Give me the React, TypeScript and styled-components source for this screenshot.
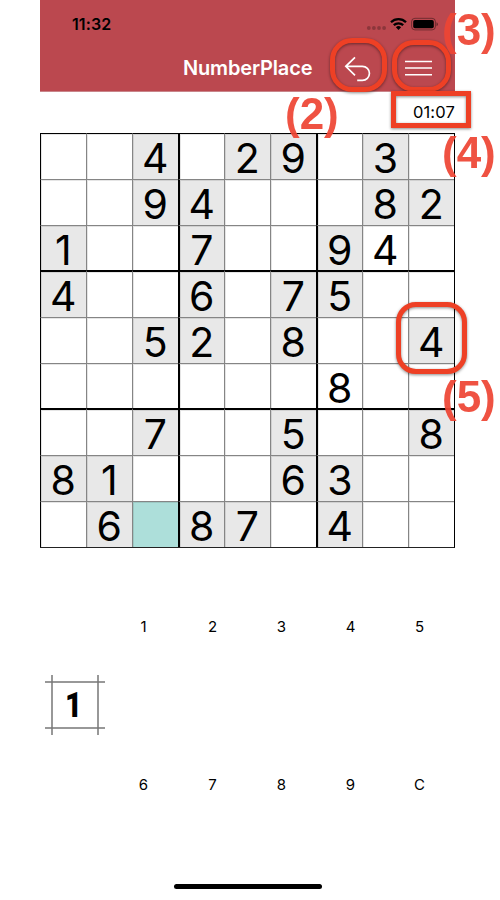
import React from 'react';
import styled, { createGlobalStyle } from 'styled-components';

const GlobalStyle = createGlobalStyle`
  * { box-sizing: border-box; }
  body { margin: 0; background: #fff; font-family: Inter, "Liberation Sans", sans-serif; color: #000; }
`;

const Page = styled.div`
  position: relative;
  width: 500px;
  height: 900px;
  overflow: hidden;
  background: #fff;
`;

const Phone = styled.main`
  width: 415px;
  height: 900px;
  margin-left: 40px;
  display: flex;
  flex-direction: column;
`;

const Header = styled.header`
  height: 92px;
  flex: none;
  background: #bb484f;
  border-bottom: 1px solid #c9858a;
`;

const StatusBar = styled.div`
  height: 47px;
  padding: 0 16px 0 32px;
  display: flex;
  justify-content: space-between;
`;

const Clock = styled.span`
  margin-top: 14px;
  font-size: 16px;
  line-height: 20px;
  font-weight: 600;
  letter-spacing: 0.1px;
`;

const StatusIcons = styled.svg`
  width: 73px;
  height: 16px;
  margin-top: 16px;
`;

const NavBar = styled.div`
  height: 44px;
  display: grid;
  grid-template-columns: 1fr 129px 1fr;
  align-items: center;
`;

const Title = styled.h1`
  grid-column: 2;
  margin: 0;
  color: #fff;
  font-size: 20px;
  line-height: 24px;
  font-weight: 600;
  letter-spacing: -0.16px;
  white-space: nowrap;
  text-align: center;
  transform: translateY(-1px);
`;

const Actions = styled.div`
  display: flex;
  height: 44px;
  padding-left: 31px;
  gap: 30px;
`;

const ActionButton = styled.button`
  border: 0;
  padding: 0;
  background: none;
  width: 30px;
  height: 44px;
  svg { display: block; }
`;

const TimerRow = styled.div`
  height: 40px;
  margin-bottom: 1px;
  flex: none;
  display: flex;
  justify-content: flex-end;
  align-items: center;
  font-size: 16.5px;
  letter-spacing: 0.15px;
`;

const Board = styled.div`
  width: 415px;
  height: 415px;
  flex: none;
  display: grid;
  grid-template: repeat(9, 46px) / repeat(9, 46px);
  border-right: 1px solid #000;
  border-bottom: 1px solid #222;
`;

type CellKind = 'open' | 'given' | 'selected';
const fills: Record<CellKind, string> = { open: '#fff', given: '#e8e8e8', selected: '#addfda' };
const line = (n: number) =>
  n === 0 ? '1px solid #000' : n % 3 === 0 ? '2px solid #000' : '1px solid #858585';

const Cell = styled.div<{ $row: number; $col: number; $kind: CellKind }>`
  display: flex;
  align-items: center;
  justify-content: center;
  margin-top: ${p => (p.$row > 0 && p.$row % 3 === 0 ? '-1px' : '0')};
  border-left: ${p => line(p.$col)};
  border-top: ${p => line(p.$row)};
  background: ${p => fills[p.$kind]};
  box-shadow: inset 1px 1px 0 rgba(0, 0, 0, 0.1);
  font-size: 41px;
  line-height: 45px;
  span { transform: translate(-0.2px, 2px); }
`;

const Keypad = styled.div`
  height: 316px;
  flex: none;
  display: grid;
  grid-template: repeat(2, 158px) / repeat(6, 69px);
`;

const MemoButton = styled.button`
  grid-row: 1 / 3;
  border: 0;
  padding: 0 0 2px;
  background: none;
  display: grid;
  place-content: center;
  place-items: center;
`;

const MemoFrame = styled.svg`
  grid-area: 1 / 1;
  width: 60px;
  height: 60px;
`;

const MemoDigit = styled.span`
  grid-area: 1 / 1;
  font: 900 35px/40px Roboto, sans-serif;
  color: #000;
  transform: translate(-0.5px, 0.5px) scaleX(0.85);
`;

const Key = styled.button`
  border: 0;
  padding: 0;
  background: none;
  color: #000;
  font: 400 15px/20px Inter, sans-serif;
`;

const HomeBar = styled.div`
  width: 148px;
  height: 5px;
  margin: 19.5px auto 0;
  border-radius: 3px;
  background: #000;
`;

const Ring = styled.div<{ $x: number; $y: number; $w: number; $h: number; $r: number }>`
  position: absolute;
  left: ${p => p.$x}px;
  top: ${p => p.$y}px;
  width: ${p => p.$w}px;
  height: ${p => p.$h}px;
  border: 5px solid #ee4025;
  border-radius: ${p => p.$r}px;
  filter: drop-shadow(0 1.5px 1.5px rgba(0, 0, 0, 0.45));
  pointer-events: none;
`;

const Note = styled.span<{ $x: number; $y: number }>`
  position: absolute;
  left: ${p => p.$x}px;
  top: ${p => p.$y}px;
  font: 700 44px/44px "Liberation Sans", Arial, sans-serif;
  color: #ee4534;
  opacity: 0.93;
  pointer-events: none;
`;

// Lowercase letters mark cells filled in by the player: a = 1 … i = 9.
const puzzle = [
  '..4.29.3.',
  '..94...82',
  '1..7..9d.',
  '4..6.75..',
  '..52.8..4',
  '......h..',
  '..7..5..8',
  '81...63..',
  '.6s87.4..',
];

function readCell(ch: string): { kind: CellKind; text: string } {
  if (ch === '.') return { kind: 'open', text: '' };
  if (ch === 's') return { kind: 'selected', text: '' };
  if (ch >= 'a') return { kind: 'open', text: String(ch.charCodeAt(0) - 96) };
  return { kind: 'given', text: ch };
}

const keys = ['1', '2', '3', '4', '5', '6', '7', '8', '9', 'C'];

export default function App() {
  return (
    <Page>
      <GlobalStyle />
      <Phone>
        <Header>
          <StatusBar>
            <Clock>11:32</Clock>
            <StatusIcons viewBox="366 16 73 16">
              <g fill="#000" fillOpacity="0.25">
                <circle cx="368.8" cy="28" r="1.9" />
                <circle cx="373.9" cy="28" r="1.9" />
                <circle cx="379" cy="28" r="1.9" />
                <circle cx="384.1" cy="28" r="1.9" />
              </g>
              <g fill="none" stroke="#000" strokeWidth="2.3">
                <path d="M391 22.2a10.7 10.7 0 0 1 15 0" />
                <path d="M393.8 25.2a6.8 6.8 0 0 1 9.4 0" />
              </g>
              <path d="M395.9 27.2a3.8 3.8 0 0 1 5.2 0l-2.6 2.7z" />
              <rect x="411.6" y="18.3" width="23.8" height="11.6" rx="3.3" fill="none" stroke="#000" strokeOpacity="0.4" />
              <rect x="413.2" y="19.9" width="20.6" height="8.4" rx="1.8" />
              <path d="M436.5 22.2q1.4.6 1.4 2t-1.4 2z" fillOpacity="0.45" />
            </StatusIcons>
          </StatusBar>
          <NavBar>
            <Title>NumberPlace</Title>
            <Actions>
              <ActionButton aria-label="Undo">
                <svg width="30" height="44" viewBox="343 47 30 44" fill="none" stroke="#fff" strokeWidth="1.7">
                  <path d="M355 57.4 345.8 66.3 355 75.3M346 66.3H362.4a7.05 7.05 0 0 1 0 14.1H357.2" />
                </svg>
              </ActionButton>
              <ActionButton aria-label="Menu">
                <svg width="30" height="44" viewBox="403 47 30 44" fill="none" stroke="#fff" strokeWidth="1.5">
                  <path d="M405 61.5H432M405 68.1H432M405 74.7H432" />
                </svg>
              </ActionButton>
            </Actions>
          </NavBar>
        </Header>
        <TimerRow>01:07</TimerRow>
        <Board>
          {puzzle.flatMap((row, r) =>
            [...row].map((ch, c) => {
              const { kind, text } = readCell(ch);
              return (
                <Cell key={`${r}-${c}`} $row={r} $col={c} $kind={kind}>
                  <span>{text}</span>
                </Cell>
              );
            }),
          )}
        </Board>
        <Keypad>
          <MemoButton>
            <MemoFrame viewBox="0 0 60 60" stroke="#777" strokeWidth="1.5">
              <path d="M0 7H60M0 53H60M7 0V60M53 0V60" />
            </MemoFrame>
            <MemoDigit>1</MemoDigit>
          </MemoButton>
          {keys.map(k => (
            <Key key={k}>{k}</Key>
          ))}
        </Keypad>
        <HomeBar />
      </Phone>
      <Ring $x={330} $y={37.5} $w={57} $h={54} $r={22} />
      <Ring $x={392} $y={39.5} $w={58.5} $h={52} $r={22} />
      <Ring $x={390.7} $y={91.3} $w={80.3} $h={37} $r={0} />
      <Ring $x={396} $y={302} $w={71} $h={72} $r={20} />
      <Note $x={285} $y={92}>(2)</Note>
      <Note $x={442} $y={8}>(3)</Note>
      <Note $x={442} $y={131}>(4)</Note>
      <Note $x={442} $y={375}>(5)</Note>
    </Page>
  );
}
